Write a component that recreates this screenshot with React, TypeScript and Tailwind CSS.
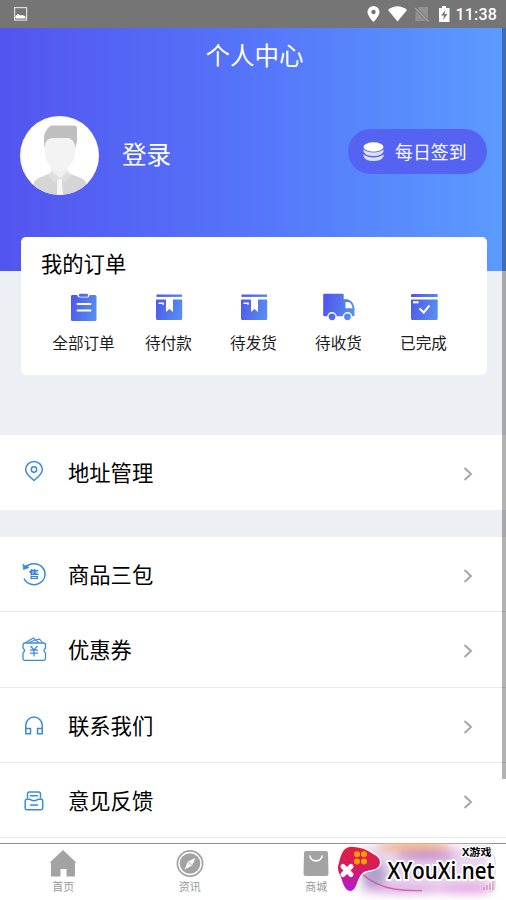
import type { ReactNode } from 'react';

const orders = [
  { label: '全部订单', icon: <ClipboardIcon /> },
  { label: '待付款', icon: <PackageIcon /> },
  { label: '待发货', icon: <PackageIcon /> },
  { label: '待收货', icon: <TruckIcon /> },
  { label: '已完成', icon: <DoneIcon /> },
];

const services = [
  { label: '商品三包', icon: <WarrantyIcon /> },
  { label: '优惠券', icon: <CouponIcon /> },
  { label: '联系我们', icon: <HeadsetIcon /> },
  { label: '意见反馈', icon: <FeedbackIcon /> },
];

const tabs = [
  { label: '首页', icon: <HomeIcon /> },
  { label: '资讯', icon: <CompassIcon /> },
  { label: '商城', icon: <BagIcon /> },
];

function OrderSvg({ children }: { children: ReactNode }) {
  return (
    <svg width="34" height="30" viewBox="0 0 34 30" fill="url(#order-fill)">
      {children}
    </svg>
  );
}

function ClipboardIcon() {
  return (
    <OrderSvg>
      <path d="M5 3h5.500a2.500 2.500 0 0 0 2.500 2.500h7A2.500 2.500 0 0 0 22.500 3H28a1.500 1.500 0 0 1 1.500 1.500v23A1.500 1.500 0 0 1 28 29H5.500A1.500 1.500 0 0 1 4 27.500v-23A1.500 1.500 0 0 1 5 3z" />
      <rect x="12" y="1.800" width="9" height="3" rx="1" />
      <path d="M10.500 12h13M10.500 18.500h13" stroke="#fff" strokeWidth="2" strokeLinecap="round" />
    </OrderSvg>
  );
}

function PackageIcon() {
  return (
    <OrderSvg>
      <rect x="4.500" y="2.500" width="25.500" height="2.400" />
      <path d="M4 7.500h10v12.500l3.500-3 3.500 3V7.500h9.200V26.500a1.500 1.500 0 0 1-1.500 1.500H5.500A1.500 1.500 0 0 1 4 26.500z" />
      <path d="M6.500 11.200H11V12.800" fill="none" stroke="#fff" strokeWidth="1.600" />
    </OrderSvg>
  );
}

function TruckIcon() {
  return (
    <OrderSvg>
      <path d="M2.200 1.800h18.500a1 1 0 0 1 1 1v4.500h3.800q6 1.500 7 9V23a1.200 1.200 0 0 1-1.200 1.200H2.200a1 1 0 0 1-1-1V2.800a1 1 0 0 1 1-1z" />
      <path d="M23.500 10v6.200h7q-.5-5-4-6.200z" fill="#fff" />
      <circle cx="10" cy="24.800" r="4.100" stroke="#fff" strokeWidth="1.400" />
      <circle cx="25.500" cy="24.800" r="4.100" stroke="#fff" strokeWidth="1.400" />
    </OrderSvg>
  );
}

function DoneIcon() {
  return (
    <OrderSvg>
      <path d="M5.500 2h24a1.200 1.200 0 0 1 1.200 1.200V5H4V3.200A1.200 1.200 0 0 1 5.500 2z" />
      <path d="M4 7.500h26.700v19a1.500 1.500 0 0 1-1.500 1.500H5.500A1.500 1.500 0 0 1 4 26.500z" />
      <path d="M6 10.300h5.500" stroke="#fff" strokeWidth="2" />
      <path d="M12.500 16.500l4.200 4L22.500 13.500" fill="none" stroke="#fff" strokeWidth="2" />
    </OrderSvg>
  );
}

function LineSvg({ children }: { children: ReactNode }) {
  return (
    <svg className="shrink-0" width="28" height="28" viewBox="0 0 28 28" fill="none" stroke="#3b8ad9" strokeWidth="1.500">
      {children}
    </svg>
  );
}

function PinIcon() {
  return (
    <LineSvg>
      <path d="M14 22.500c-3-2.800-8.300-6-8.300-11a8.300 8 0 0 1 16.600 0c0 5-5.300 8.200-8.300 11z" />
      <circle cx="14" cy="11.500" r="2.700" />
    </LineSvg>
  );
}

function WarrantyIcon() {
  return (
    <LineSvg>
      <path d="M5.500 7.500A11 10.500 0 1 1 4 18.500" />
      <path d="M3 4l.5 5.500L9 7.500 6.500 6.500 7 5 5 6z" fill="#3b8ad9" strokeWidth="0.800" />
      <text x="14" y="18" textAnchor="middle" fontSize="10.500" fontWeight="700" fill="#2d7fd6" stroke="none">售</text>
    </LineSvg>
  );
}

function CouponIcon() {
  return (
    <LineSvg>
      <path d="M4.500 8h19a2 2 0 0 1 2 2v3q-3 2.500 0 5v5.500a1.800 1.800 0 0 1-1.800 1.800H4.800A1.800 1.800 0 0 1 3 23.500V18q3-2.500 0-5v-3a2 2 0 0 1 1.500-2z" strokeWidth="1.300" />
      <path d="M5.500 7.500l8-4.500 2 2 4-.8 3 3.300M9 7.500l6-2.500 4 2.500" strokeWidth="1.100" />
      <path d="M10.500 11l3.500 4 3.500-4M14 15v6.500M10 15.200h8M10 18.200h8" strokeWidth="1.200" />
    </LineSvg>
  );
}

function HeadsetIcon() {
  return (
    <LineSvg>
      <path d="M5.800 17.800v-3.500a8.200 8.200 0 0 1 16.400 0v3.500" />
      <path d="M5.800 17.500h4.700v5.300H5.800zM17.500 17.500h4.700v5.300h-4.700z" />
    </LineSvg>
  );
}

function FeedbackIcon() {
  return (
    <LineSvg>
      <path d="M7.500 12.500V8a2 2 0 0 1 2-2h9a2 2 0 0 1 2 2v4.500M10 9.800h8M10 19h8" />
      <path d="M7 13.200h2.500q4.500 3 9 0H21a1.700 1.700 0 0 1 1.700 1.700V22a1.800 1.800 0 0 1-1.800 1.800H7A1.800 1.800 0 0 1 5.200 22v-7A1.800 1.800 0 0 1 7 13.200z" />
    </LineSvg>
  );
}

function HomeIcon() {
  return (
    <svg width="28" height="28" viewBox="0 0 28 28" fill="#a3a3a3">
      <path d="M14 0L27.500 12.700H26V26.500h-8.500v-7.500h-6v7.500H2V12.700H.5z" />
    </svg>
  );
}

function CompassIcon() {
  return (
    <svg width="28" height="28" viewBox="0 0 28 28">
      <circle cx="14" cy="13.500" r="12.600" fill="none" stroke="#a3a3a3" strokeWidth="1.700" />
      <circle cx="14" cy="13.500" r="10.300" fill="#a3a3a3" />
      <path d="M19.500 8l-3.500 7.500-7.500 4 3.500-8z" fill="#fff" />
      <path d="M12.500 12l3 3" stroke="#a3a3a3" strokeWidth="1" />
    </svg>
  );
}

function BagIcon() {
  return (
    <svg width="28" height="28" viewBox="0 0 28 28">
      <path d="M4 1h20a2 2 0 0 1 2 2l.5 20.500a2.500 2.500 0 0 1-2.500 2.500H4a2.500 2.500 0 0 1-2.500-2.500L2 3a2 2 0 0 1 2-2z" fill="#a3a3a3" />
      <path d="M8 6c.5 6.500 11.500 6.500 12 0" fill="none" stroke="#fff" strokeWidth="1.700" strokeLinecap="round" />
    </svg>
  );
}

function StatusBar() {
  return (
    <div className="flex h-7 shrink-0 items-center justify-between bg-[#757575] pr-2.25 pl-3.5">
      <svg width="14" height="14" viewBox="0 0 14 14">
        <rect x=".6" y=".6" width="12" height="12.500" fill="none" stroke="#ddd" strokeWidth="1.200" />
        <path d="M1.500 11.500V9l2.500-2 2.500 1.500 2-.5 3 1.500v2z" fill="#fff" />
      </svg>
      <div className="flex items-center">
        <svg width="84" height="18" viewBox="0 0 84 18" fill="#fff">
          <path fillRule="evenodd" d="M6.500 1a6 6 0 0 1 6 6c0 4-6 10-6 10S.5 11 .5 7a6 6 0 0 1 6-6zm0 3.800a2.200 2.200 0 1 0 0 4.400 2.200 2.200 0 0 0 0-4.400z" />
          <path d="M21 5q9.500-7.500 19 0l-9.500 11.500z" />
          <path d="M52 2h9v14H48.500V6z" fill="#929292" />
          <path d="M47.500 2.500L62 17" stroke="#757575" strokeWidth="3" />
          <path d="M48 3l13.500 13.500" stroke="#a3a3a3" strokeWidth="1.400" />
          <path fillRule="evenodd" d="M72 3h3V1h4v2h3.500v14H72zm6.500 2l-4.500 5.500h3l-1 4.500 4.500-6h-3z" />
        </svg>
        <span className="ml-1 pt-0.5 font-['Roboto'] text-[16px] leading-7 font-medium tracking-[0.2px] text-white">11:38</span>
      </div>
    </div>
  );
}

function Avatar() {
  return (
    <svg className="shrink-0 rounded-full" width="79" height="79" viewBox="0 0 79 79">
      <rect width="79" height="79" fill="#fff" />
      <path d="M14 79V66q2-4 18-9h15q17 5 19 9v13z" fill="#d5d5d5" />
      <path d="M31 50h17v8l-8.500 10L31 58z" fill="#f0f0f0" />
      <path d="M31 55l-3 5 7 7 5-5zM48 55l3 5-7 7-4-5z" fill="#dfdfdf" />
      <path d="M37 64h5l1 15h-6z" fill="#f5f5f5" />
      <path d="M25 33q-4-17 6-23.500h23a3 3 0 0 1 3 3V25l-2 8z" fill="#bfbfbf" />
      <path d="M25 28q2-6 8-6h15q5 1 7 7v11q-5 15-15.500 15T25 40z" fill="#f3f3f3" />
    </svg>
  );
}

function Chevron() {
  return (
    <svg className="mt-1 ml-auto" width="10" height="14" viewBox="0 0 10 14" fill="none" stroke="#a5a5a5" strokeWidth="1.900">
      <path d="M1.500 1L8 7l-6.500 6" />
    </svg>
  );
}

function MenuRow({ label, icon }: { label: string; icon: ReactNode }) {
  return (
    <div className="flex h-[75.300px] items-center border-b border-[#e9e9e9] bg-white pr-[33px] pl-5 only:border-white">
      {icon}
      <span className="ml-5 text-[21.300px] leading-8 text-black">{label}</span>
      <Chevron />
    </div>
  );
}

function Watermark() {
  return (
    <svg className="absolute right-0 bottom-0" width="176" height="57" viewBox="0 0 176 57">
      <defs>
        <linearGradient id="pad" x1="0" y1="0" x2="0" y2="1">
          <stop offset="0" stopColor="#e21f3c" />
          <stop offset=".5" stopColor="#d51c60" />
          <stop offset="1" stopColor="#b31adf" />
        </linearGradient>
        <filter id="haze" x="-30%" y="-50%" width="160%" height="200%">
          <feGaussianBlur stdDeviation="4.500" />
        </filter>
      </defs>
      <g filter="url(#haze)">
        <rect x="30" y="3" width="128" height="48" fill="#ead6ee" />
        <ellipse cx="84" cy="3" rx="38" ry="6" fill="#f0b890" />
        <ellipse cx="96" cy="13" rx="30" ry="5" fill="#c98fd2" />
        <ellipse cx="44" cy="32" rx="12" ry="14" fill="#b0a0cf" />
        <ellipse cx="74" cy="46" rx="36" ry="5" fill="#deb0e4" />
        <ellipse cx="136" cy="46" rx="28" ry="5" fill="#e6a9e2" />
      </g>
      <path d="M32 31q14 12 32 15 14 2 28 1.500" fill="none" stroke="#d3408f" strokeWidth="1.400" opacity=".75" />
      <path d="M153 10q12-2 12 7v26q0 5-6 6" fill="none" stroke="#d2cbd2" />
      <path d="M154 47v-3m3 3v-5m3 5v-7m3 7v-9" stroke="#cf8aab" strokeWidth="1.200" />
      <path
        d="M14 7c5-5 10-3 16-2 7 1 11 5 15 7 5 3 6 7 4 11-2 3-7 4-12 5-6 1-8 7-10 12-2 6-4 8-7 8-5-1-7-7-9-14-3-6-4-9-2-14 1-5 2-9 5-13z"
        fill="url(#pad)"
        stroke="#fff"
        strokeWidth="2.500"
        strokeLinejoin="round"
        paintOrder="stroke"
      />
      <path d="M13 23.500l8 8m0-8l-8 8" stroke="#fff" strokeWidth="5" strokeLinecap="round" />
      <g fill="#ff9d08">
        <circle cx="27" cy="11.300" r="3" />
        <circle cx="34" cy="11.300" r="3" />
        <circle cx="27" cy="18.600" r="3" />
        <circle cx="34" cy="18.600" r="3" />
      </g>
      <g fill="#000" stroke="#fff" strokeLinejoin="round" paintOrder="stroke" fontFamily="'Open Sans', 'Noto Sans CJK SC', sans-serif">
        <text x="57.500" y="36.300" fontSize="23.500" fontWeight="600" strokeWidth="4" textLength="107" lengthAdjust="spacingAndGlyphs">XYouXi.net</text>
        <text x="132" y="13" fontSize="10.500" fontWeight="700" strokeWidth="2.500" textLength="29.500" lengthAdjust="spacingAndGlyphs">X游戏</text>
      </g>
    </svg>
  );
}

export default function App() {
  return (
    <div className="relative flex h-[900px] w-[506px] flex-col overflow-hidden bg-[#eceff4] font-['Noto_Sans_CJK_SC',sans-serif]">
      <svg className="absolute" width="0" height="0">
        <defs>
          <linearGradient id="order-fill" gradientUnits="userSpaceOnUse" x1="4" y1="8" x2="31" y2="15">
            <stop offset="0" stopColor="#5058ed" />
            <stop offset="1" stopColor="#568eef" />
          </linearGradient>
        </defs>
      </svg>

      <StatusBar />

      <header className="h-[243px] shrink-0 bg-linear-to-r from-[#5354ef] via-[#5575fa] to-[#5b9bff] text-white">
        <h1 className="pl-[3px] text-center text-[24.500px] leading-[54px]">个人中心</h1>
        <div className="mt-[34px] flex items-center pr-[19px] pl-5">
          <Avatar />
          <span className="mb-[3px] ml-[23px] text-[24.500px] leading-9">登录</span>
          <button className="mb-2 ml-auto flex h-[45px] w-[139px] items-center rounded-full bg-[#5563f2] pl-[15px]">
            <svg width="21" height="20" viewBox="0 0 21 20" fill="#fff">
              <path d="M.5 12.500v2q2 4.500 10 4.500t10-4.500v-2q-4 3-10 3t-10-3zM.5 7.500v2Q2.500 14 10.500 14t10-4.500v-2q-4 3-10 3t-10-3z" fill="#dbe0ff" />
              <ellipse cx="10.500" cy="5" rx="10" ry="4.700" />
            </svg>
            <span className="mb-0.5 ml-[11px] text-[17.900px] leading-7">每日签到</span>
          </button>
        </div>
      </header>

      <section className="relative mx-auto -mt-[34px] h-[138px] w-[466px] shrink-0 translate-x-px rounded-[5px] bg-white px-5 pt-2.5">
        <h2 className="text-[21.300px] leading-8 text-black">我的订单</h2>
        <div className="mt-[13px] flex w-[425px]">
          {orders.map((item, i) => (
            <div key={i} className="flex flex-1 flex-col items-center">
              {item.icon}
              <span className="mt-2 text-[15.600px] leading-6 text-[#1c1c1c]">{item.label}</span>
            </div>
          ))}
        </div>
      </section>

      <section className="mt-[60px] flex h-[75px] shrink-0 flex-col">
        <MenuRow label="地址管理" icon={<PinIcon />} />
      </section>
      <section className="mt-[27px] min-h-0 flex-1 bg-white">
        {services.map((item) => (
          <MenuRow key={item.label} label={item.label} icon={item.icon} />
        ))}
      </section>

      <nav className="grid h-[57px] shrink-0 grid-cols-4 border-t border-[#919191] bg-white">
        {tabs.map((tab) => (
          <div key={tab.label} className="flex flex-col items-center pt-1.5">
            {tab.icon}
            <span className="text-[11px] leading-[17px] text-[#999]">{tab.label}</span>
          </div>
        ))}
      </nav>

      <div className="absolute top-7 right-0 h-[751px] w-1 bg-black/30" />
      <Watermark />
    </div>
  );
}
